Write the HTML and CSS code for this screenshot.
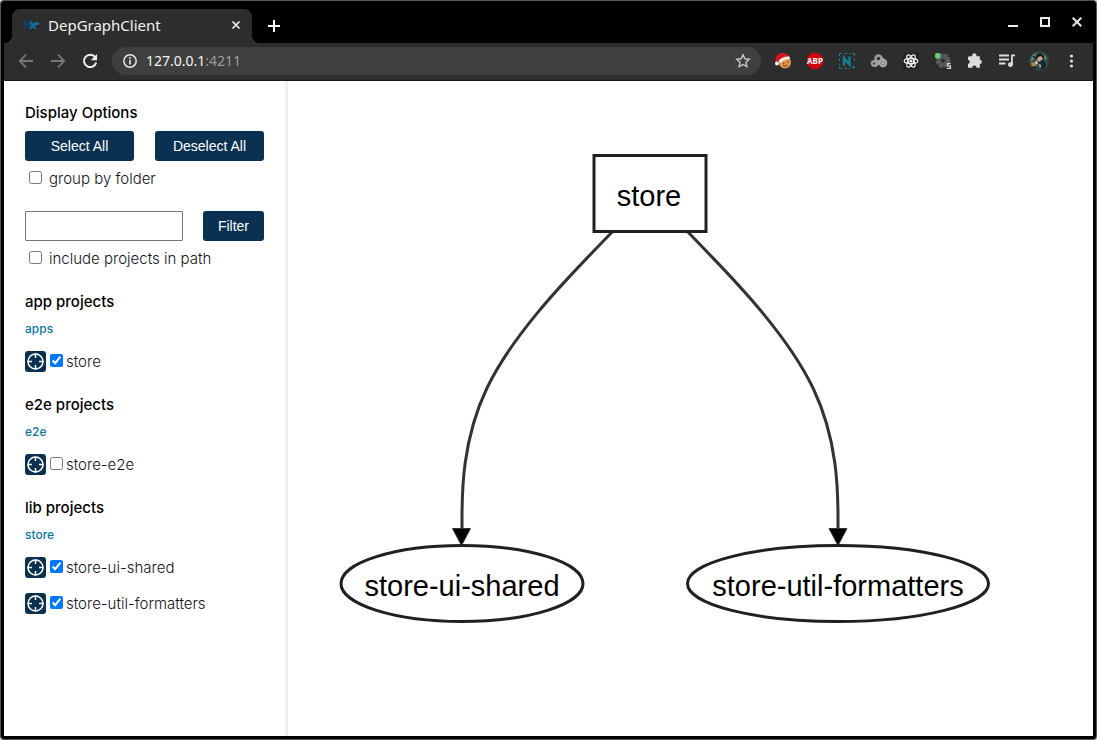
FILE: index.html
```html
<!DOCTYPE html>
<html lang="en">
<head>
<meta charset="utf-8">
<title>DepGraphClient</title>
<link rel="stylesheet" href="styles.css">
</head>
<body>
<svg class="defs" aria-hidden="true">
  <symbol id="focus" viewBox="0 0 21 21">
    <g fill="none" stroke="#fff" stroke-width="1.5"><circle cx="10.5" cy="10.5" r="7.5"/><path d="M10.5 2.500v4.500M10.500 14v4.500M2.500 10.500h4.500M14 10.500h4.500"/></g>
  </symbol>
</svg>
<div class="window">
  <header class="tabstrip">
    <div class="tab">
      <svg class="favicon" viewBox="0 0 16 16"><path d="M0 12.500V3h2.400L6 8.500V3h2v6L6 12.500 2.200 7.200v5.300z" fill="#0f3d63"/><path d="M5 4.500h2.800l1.700 2.200c.8-1.500 2-2 3.400-1.700l2.800 1.600-1 1.600c-1.600-.4-2.800 0-3.700 1.300l1.500 2.500H10L8.600 10.200 7.200 12H4.800l2.600-4z" fill="#0f7099"/></svg>
      <span class="tab-title">DepGraphClient</span>
      <button class="icon-btn small" aria-label="Close tab"><svg viewBox="0 0 16 16"><path d="M4.500 4.500l7 7M11.500 4.500l-7 7" stroke="#eee" stroke-width="1.700"/></svg></button>
    </div>
    <button class="icon-btn new-tab" aria-label="New tab"><svg viewBox="0 0 16 16"><path d="M8 2v12M2 8h12" stroke="#fff" stroke-width="2"/></svg></button>
    <div class="controls">
      <button class="icon-btn" aria-label="Minimize"><svg viewBox="0 0 16 16"><path d="M3 12h10" stroke="#eee" stroke-width="2"/></svg></button>
      <button class="icon-btn" aria-label="Maximize"><svg viewBox="0 0 16 16"><path d="M4 4h8v8H4z" fill="none" stroke="#eee" stroke-width="2"/></svg></button>
      <button class="icon-btn" aria-label="Close"><svg viewBox="0 0 16 16"><path d="M3.700 3.700l8.600 8.600M12.300 3.700l-8.600 8.600" stroke="#e4e4ee" stroke-width="2"/></svg></button>
    </div>
  </header>

  <nav class="toolbar">
    <div class="tools">
      <button class="icon-btn" aria-label="Back"><svg viewBox="0 0 16 16"><path d="M15 8H2M8 1.700L1.800 8 8 14.300" fill="none" stroke="#777" stroke-width="1.800"/></svg></button>
      <button class="icon-btn" aria-label="Forward"><svg viewBox="0 0 16 16"><path d="M1 8h13M8 1.700L14.200 8 8 14.300" fill="none" stroke="#777" stroke-width="1.800"/></svg></button>
      <button class="icon-btn" aria-label="Reload"><svg viewBox="0 0 16 16"><path d="M13.200 4.200A6.200 6.200 0 1 0 14.200 9.500" fill="none" stroke="#eee" stroke-width="2"/><path d="M15 1v6.200H8.800z" fill="#eee"/></svg></button>
    </div>
    <div class="omnibox">
      <svg class="info" viewBox="0 0 16 16"><circle cx="8" cy="8" r="6.200" fill="none" stroke="#e4e4e4" stroke-width="1.500"/><path d="M8 7v4.500M8 4.300v1.600" stroke="#eee" stroke-width="1.600"/></svg>
      <span class="url">127.0.0.1<span class="port">:4211</span></span>
      <button class="icon-btn star" aria-label="Bookmark"><svg viewBox="0 0 16 16"><path d="M8 1.800l1.900 4 4.400.5-3.300 3 .9 4.400L8 11.500l-3.900 2.200.9-4.400-3.300-3 4.400-.5z" fill="none" stroke="#c9c9c9" stroke-width="1.400"/></svg></button>
    </div>
    <div class="tools">
      <button class="icon-btn" aria-label="Cookie extension"><svg viewBox="0 0 16 16"><circle cx="10" cy="9.500" r="6" fill="#e09a50"/><path d="M8 10.500h1.500M12 9h1.500M8 12.500q2.500 1.500 4.500-.5" stroke="#87501f" stroke-width="1.300" fill="none"/><path d="M0 9C1 3 3 0 7 0c4 0 6 1.500 7 4L7 6 3 9z" fill="#d9141c"/><path d="M3.500 8.500C5 5.500 9 3 14.500 3.500l.5 2.500C11 6 8 7.500 5.500 10z" fill="#f5efea"/><circle cx="2" cy="10.500" r="2" fill="#f4f4f4"/></svg></button>
      <button class="icon-btn" aria-label="Adblock Plus"><svg viewBox="0 0 16 16"><path d="M4.700 0h6.600L16 4.700v6.600L11.300 16H4.700L0 11.300V4.700z" fill="#d2060e"/><text class="abp" x="8" y="11" text-anchor="middle">ABP</text></svg></button>
      <button class="icon-btn" aria-label="N extension"><svg viewBox="0 0 16 16"><path d="M.5 3V.5H3M5.500.5H8M10 .5h1.500M13 .5h2.500V3M15.500 5.500V8M.5 5.500V8M.5 10.500v1.500M.5 13.500v2H3M5.500 15.500H8M10 15.500h1.500M14.500 12.500v3M13 14.500h3" fill="none" stroke="#118497"/><path d="M5 12.500V5l5.500 6.500V3.500" fill="none" stroke="#118497" stroke-width="2.300"/></svg></button>
      <button class="icon-btn" aria-label="Cloud extension"><svg viewBox="0 0 16 16"><g fill="none" stroke="#9c9c9c" stroke-width="2.600"><circle cx="7.500" cy="5.500" r="3"/><circle cx="3.200" cy="10.500" r="2.200"/></g><circle cx="12" cy="10" r="4.200" fill="#b4b4b4"/><path d="M5 13l7-8" stroke="#aaa" stroke-width="2"/><circle cx="12" cy="10" r="2.200" fill="none" stroke="#777"/></svg></button>
      <button class="icon-btn" aria-label="React tools"><svg viewBox="0 0 16 16"><path d="M0 0h16v16H0z" fill="#222"/><g fill="none" stroke="#eee" stroke-width="1.200"><ellipse cx="8" cy="8" rx="6.800" ry="2.700"/><ellipse cx="8" cy="8" rx="6.800" ry="2.700" transform="rotate(60 8 8)"/><ellipse cx="8" cy="8" rx="6.800" ry="2.700" transform="rotate(120 8 8)"/></g><circle cx="8" cy="8" r="1.500" fill="#eee"/></svg></button>
      <button class="icon-btn" aria-label="Script extension"><svg viewBox="0 0 16 16"><circle cx="8" cy="7.500" r="5" fill="none" stroke="#606060" stroke-width="4.500" stroke-dasharray="3 1"/><circle cx="8" cy="7.500" r="4" fill="none" stroke="#585858" stroke-width="4"/><rect x="0" y="0" width="5.500" height="5.500" rx="2" fill="#63d477"/><path d="M15.500 10.600h-3v2.200h3v2.600h-3.700" fill="none" stroke="#ddd" stroke-width="1.200"/></svg></button>
      <button class="icon-btn" aria-label="Extensions"><svg viewBox="0 0 16 16"><path d="M2 3.200h3.200a2.200 2.200 0 1 1 4.200 0h3.400v3.600a2.100 2.100 0 1 1 0 4.200v3.700H9.600a2.200 2.200 0 0 0-4.400 0H1V11a2.200 2.200 0 0 0 0-4.300V4.200z" fill="#ddd"/></svg></button>
      <button class="icon-btn" aria-label="Media"><svg viewBox="0 0 16 16"><path d="M0 2.500h10M0 6.500h10M0 10.500h6.500M13 11.500V2.300h3" fill="none" stroke="#ddd" stroke-width="1.800"/><circle cx="11.400" cy="11.700" r="2.400" fill="#ddd"/></svg></button>
      <button class="icon-btn avatar" aria-label="Profile"><svg viewBox="0 0 20 20"><circle cx="10" cy="10" r="10" fill="#304840"/><path d="M3 4l5-2-3 7-4 2zM14 2l4 5-2 4z" fill="#587f72"/><path d="M9 3c5 0 8 6 6 13l-4 3-2-7z" fill="#182b38"/><path d="M7 5l4-3 4 3-2 4-4-1z" fill="#161a20"/><path d="M9 6l3-1 2 3-4 3-2-2z" fill="#d7a285"/><path d="M2 12l4-1 1 4-4 1z" fill="#b18a3e"/><path d="M7 9l2 3-1 2-2-2zM10 13l2 1-1 4z" fill="#ddd7cc"/><path d="M14 10l2 3-2 5M4 5l4 3M3 16l4 1" stroke="#102025" stroke-width="1.500" fill="none"/></svg></button>
      <button class="icon-btn" aria-label="Menu"><svg viewBox="0 0 16 16"><g fill="#ddd"><circle cx="8.500" cy="3" r="1.600"/><circle cx="8.500" cy="8" r="1.600"/><circle cx="8.500" cy="13" r="1.600"/></g></svg></button>
    </div>
  </nav>

  <div class="page">
    <aside class="sidebar">
      <h4>Display Options</h4>
      <div class="pair">
        <button class="btn wide">Select All</button>
        <button class="btn wide">Deselect All</button>
      </div>
      <label class="option"><input type="checkbox"> group by folder</label>
      <form class="pair filter">
        <input class="filter-text" type="text" aria-label="Filter projects">
        <button class="btn" type="button">Filter</button>
      </form>
      <label class="option"><input type="checkbox"> include projects in path</label>

      <section class="group">
        <h4>app projects</h4>
        <h5>apps</h5>
        <div class="project"><button class="focus" aria-label="Focus store"><svg><use href="#focus"/></svg></button><label><input type="checkbox" checked>store</label></div>
      </section>
      <section class="group">
        <h4>e2e projects</h4>
        <h5>e2e</h5>
        <div class="project"><button class="focus" aria-label="Focus store-e2e"><svg><use href="#focus"/></svg></button><label><input type="checkbox">store-e2e</label></div>
      </section>
      <section class="group">
        <h4>lib projects</h4>
        <h5>store</h5>
        <div class="project"><button class="focus" aria-label="Focus store-ui-shared"><svg><use href="#focus"/></svg></button><label><input type="checkbox" checked>store-ui-shared</label></div>
        <div class="project"><button class="focus" aria-label="Focus store-util-formatters"><svg><use href="#focus"/></svg></button><label><input type="checkbox" checked>store-util-formatters</label></div>
      </section>
    </aside>
    <main class="graph">
      <svg viewBox="1 0 805 655" preserveAspectRatio="xMidYMin meet">
        <g class="edge">
          <path d="M326 150L301 176C276 202 225 255 200 307C175 359 175 412 175 438V448"/>
          <path d="M400 150L425 176C450 202 501 255 526 307C551 359 551 412 551 438V448"/>
        </g>
        <g class="arrow">
          <path d="M165.500 447.500h18l-9 17z"/>
          <path d="M542 447.500h18l-9 17z"/>
        </g>
        <g class="node">
          <rect x="307" y="74.500" width="112" height="76"/>
          <ellipse cx="175" cy="502.500" rx="121" ry="38"/>
          <ellipse cx="551" cy="502.500" rx="150.500" ry="38"/>
        </g>
        <g class="node-label">
          <text x="362" y="125">store</text>
          <text x="175" y="515">store-ui-shared</text>
          <text x="551" y="515">store-util-formatters</text>
        </g>
      </svg>
    </main>
  </div>
</div>
</body>
</html>
```
FILE: styles.css
```css
* { box-sizing: border-box; }

body {
  margin: 0;
  background: #d8d8d8;
  color: #14141a;
  font-family: Inter, "Liberation Sans", sans-serif;
  font-size: 15px;
}

button { border: 0; margin: 0; padding: 0; font: inherit; cursor: pointer; }
.defs { display: none; }

.window {
  display: flex;
  flex-direction: column;
  min-height: 100vh;
  padding: 1px 3px 3px;
  border: 1px solid #555;
  border-radius: 4px;
  background: #000;
}

/* Tab strip */
.tabstrip { display: flex; align-items: flex-end; height: 41px; padding-left: 8px; }

.tab {
  position: relative;
  display: flex;
  align-items: center;
  gap: 8px;
  width: 240px;
  height: 34px;
  padding: 0 8px 2px 12px;
  border-radius: 8px 8px 0 0;
  background: #2d2d2d;
  color: #f1f1f1;
  font-family: "Noto Sans", sans-serif;
  font-size: 15px;
}
.tab::before, .tab::after {
  content: "";
  position: absolute;
  bottom: 0;
  width: 8px;
  height: 8px;
}
.tab::before { right: 100%; background: radial-gradient(circle at 0 0, #000 8px, #2d2d2d 8px); }
.tab::after { left: 100%; background: radial-gradient(circle at 100% 0, #000 8px, #2d2d2d 8px); }
.favicon { width: 16px; height: 16px; }
.tab-title { flex: 1; }

.icon-btn {
  display: flex;
  align-items: center;
  justify-content: center;
  width: 32px;
  height: 28px;
  background: transparent;
}
.icon-btn svg { width: 16px; height: 16px; overflow: visible; }
.icon-btn.small { width: 16px; height: 16px; }
.new-tab { height: 34px; margin-left: 6px; }
.controls { display: flex; align-self: center; margin-left: auto; padding-bottom: 2px; }

/* Toolbar */
.toolbar {
  display: flex;
  align-items: center;
  gap: 6px;
  height: 38px;
  padding: 0 6px 2px;
  border-bottom: 1px solid #1b1b1b;
  background: #2d2d2d;
}
.tools { display: flex; }
.omnibox {
  display: flex;
  flex: 1;
  align-items: center;
  gap: 8px;
  height: 28px;
  padding: 0 2px 0 10px;
  border-radius: 14px;
  background: #3f3f3f;
  color: #f4f4f4;
  font-family: "Noto Sans", sans-serif;
  font-size: 14px;
}
.info { width: 16px; height: 16px; }
.url { flex: 1; }
.port { color: #9c9c9c; }
.icon-btn.avatar svg { width: 20px; height: 20px; }
.abp { fill: #fff; font: bold 8px "Noto Sans", sans-serif; }

/* Page */
.page { display: flex; flex: 1; background: #fff; }
.sidebar { flex: none; width: 284px; padding: 22px 21px; border-right: 3px solid #f0f0f0; }

h4, h5 { margin: 0; }
h4 { color: #000; font-size: 15px; font-weight: 500; line-height: 20px; }
h5 { margin: 9px 0 14px; color: #0a77a3; font-size: 12px; font-weight: 500; line-height: 16px; }

.pair { display: flex; justify-content: space-between; margin-top: 8px; }
.filter { margin-top: 22px; }
.btn {
  height: 30px;
  padding: 0 15px;
  border-radius: 3px;
  background: #0b3152;
  color: #fff;
  font-family: "Liberation Sans", Arial, sans-serif;
  font-size: 14px;
}
.btn.wide { width: 109px; padding: 0; }
.filter-text { width: 158px; height: 30px; padding: 0 6px; border: 1px solid #767676; border-radius: 1px; }

input[type="checkbox"] { flex: none; width: 13px; height: 13px; margin: 2px 0 0; accent-color: #0075ff; }
.option { display: flex; align-items: flex-start; gap: 7px; margin-top: 8px; padding-left: 4px; line-height: 20px; }
.option, .project { font-size: 15px; font-weight: 300; }

.group { margin-top: 23px; }
.project { display: flex; align-items: center; gap: 4px; height: 21px; }
.project + .project { margin-top: 15px; }
.project label { display: flex; align-items: flex-start; gap: 3px; line-height: 20px; }
.group + .group { margin-top: 23px; }
.focus { width: 21px; height: 21px; border-radius: 3px; background: #0b3152; }
.focus svg { display: block; width: 21px; height: 21px; }

/* Graph */
.graph { flex: 1; min-width: 0; }
.graph svg { display: block; width: 100%; }
.edge path { fill: none; stroke: #333; stroke-width: 3; }
.arrow path { fill: #000; stroke: #333; stroke-width: 1; }
.node rect, .node ellipse { fill: #fff; stroke: #231f20; stroke-width: 3; }
.node-label text { fill: #000; font-family: "Liberation Sans", Arial, sans-serif; font-size: 29px; text-anchor: middle; }
```
